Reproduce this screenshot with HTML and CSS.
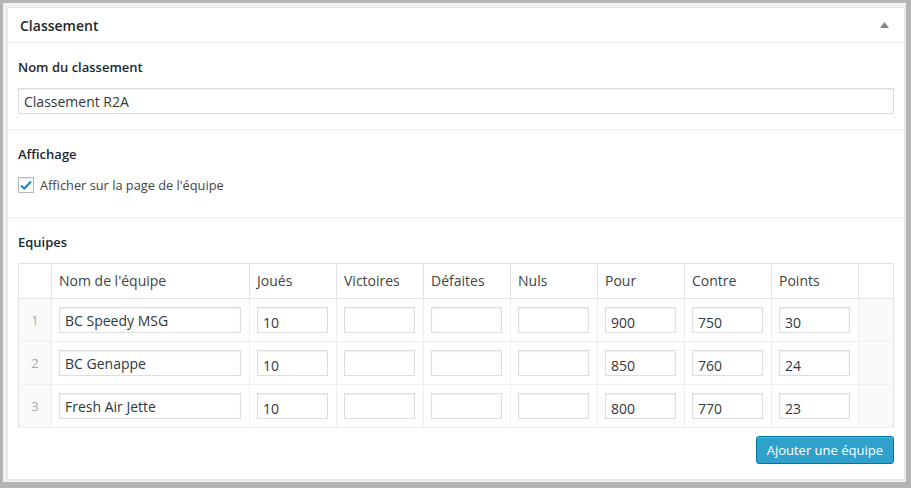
FILE: index.html
```html
<!DOCTYPE html>
<html>
  <head>
    <meta charset="utf-8">
    <title>Classement</title>
    <link rel="stylesheet" href="styles.css">
  </head>
  <body>
    <div class="frame">
      <div class="postbox">
        <div class="postbox-head">
          <h2>Classement</h2>
          <svg class="toggle" width="9" height="6" viewBox="0 0 9 6"><path d="M0 6 L4.5 0 L9 6 Z" fill="#82878c"/></svg>
        </div>

        <div class="section">
          <div class="label">Nom du classement</div>
          <input type="text" class="text-input" value="Classement R2A">
        </div>

        <div class="section">
          <div class="label">Affichage</div>
          <label class="check-row">
            <span class="checkbox">
              <svg width="12" height="10" viewBox="0 0 12 10"><path d="M1 5.5 L4.3 8.5 L11 1.5" fill="none" stroke="#1e8cbe" stroke-width="2.2"/></svg>
            </span>
            Afficher sur la page de l'équipe
          </label>
        </div>

        <div class="section last">
          <div class="label">Equipes</div>
          <table class="teams">
            <colgroup>
              <col style="width:33px">
              <col style="width:198px">
              <col style="width:87px"><col style="width:87px"><col style="width:87px"><col style="width:87px">
              <col style="width:87px"><col style="width:87px"><col style="width:87px">
              <col style="width:35px">
            </colgroup>
            <thead>
              <tr>
                <th></th>
                <th>Nom de l'équipe</th>
                <th>Joués</th>
                <th>Victoires</th>
                <th>Défaites</th>
                <th>Nuls</th>
                <th>Pour</th>
                <th>Contre</th>
                <th>Points</th>
                <th></th>
              </tr>
            </thead>
            <tbody>
              <tr>
                <td class="idx">1</td>
                <td><input class="cell-input" value="BC Speedy MSG"></td>
                <td><input class="cell-input num" value="10"></td>
                <td><input class="cell-input num" value=""></td>
                <td><input class="cell-input num" value=""></td>
                <td><input class="cell-input num" value=""></td>
                <td><input class="cell-input num" value="900"></td>
                <td><input class="cell-input num" value="750"></td>
                <td><input class="cell-input num" value="30"></td>
                <td class="side"></td>
              </tr>
              <tr>
                <td class="idx">2</td>
                <td><input class="cell-input" value="BC Genappe"></td>
                <td><input class="cell-input num" value="10"></td>
                <td><input class="cell-input num" value=""></td>
                <td><input class="cell-input num" value=""></td>
                <td><input class="cell-input num" value=""></td>
                <td><input class="cell-input num" value="850"></td>
                <td><input class="cell-input num" value="760"></td>
                <td><input class="cell-input num" value="24"></td>
                <td class="side"></td>
              </tr>
              <tr>
                <td class="idx">3</td>
                <td><input class="cell-input" value="Fresh Air Jette"></td>
                <td><input class="cell-input num" value="10"></td>
                <td><input class="cell-input num" value=""></td>
                <td><input class="cell-input num" value=""></td>
                <td><input class="cell-input num" value=""></td>
                <td><input class="cell-input num" value="800"></td>
                <td><input class="cell-input num" value="770"></td>
                <td><input class="cell-input num" value="23"></td>
                <td class="side"></td>
              </tr>
            </tbody>
          </table>
          <div class="actions">
            <button class="button-primary">Ajouter une équipe</button>
          </div>
        </div>
      </div>
    </div>
  </body>
</html>
```

FILE: styles.css
```css
html, body {
  height: 100%;
}

body {
  margin: 0;
  padding: 3px 5px 6px 3px;
  box-sizing: border-box;
  background: #b4b4b4;
  font-family: 'Open Sans', 'Liberation Sans', sans-serif;
  font-size: 13px;
  color: #444;
  display: flex;
}

.frame {
  flex: 1;
  display: flex;
  background: #f1f1f1;
  padding: 4px 1px 2px 4px;
}

.postbox {
  flex: 1;
  background: #fff;
  border: 1px solid #e5e5e5;
  box-shadow: 0 1px 1px rgba(0,0,0,0.04);
}

.postbox-head {
  display: flex;
  align-items: center;
  justify-content: space-between;
  border-bottom: 1px solid #eee;
  padding: 0 15px 0 12px;
  height: 34px;
}

.postbox-head h2 {
  margin: 0;
  font-size: 14px;
  font-weight: 600;
  color: #23282d;
}

.section {
  padding: 14px 10px 14px 10px;
  border-bottom: 1px solid #eee;
}

.section.last {
  border-bottom: none;
}

.label {
  font-weight: 600;
  line-height: 20px;
  color: #23282d;
  margin-bottom: 11px;
}

.text-input {
  display: block;
  width: 100%;
  box-sizing: border-box;
  height: 26px;
  border: 1px solid #ddd;
  box-shadow: inset 0 1px 2px rgba(0,0,0,0.07);
  padding: 0 5px;
  font-family: inherit;
  font-size: 14px;
  color: #32373c;
  margin-bottom: 1px;
}

.check-row {
  display: flex;
  align-items: center;
  gap: 6px;
  line-height: 20px;
  margin-top: 2px;
  margin-bottom: 8px;
  font-size: 12.8px;
}

.checkbox {
  width: 16px;
  height: 16px;
  box-sizing: border-box;
  border: 1px solid #b4b9be;
  box-shadow: inset 0 1px 2px rgba(0,0,0,0.1);
  display: flex;
  align-items: center;
  justify-content: center;
}

.teams {
  width: 100%;
  table-layout: fixed;
  border-collapse: collapse;
  border: 1px solid #e1e1e1;
}

.teams th {
  text-align: left;
  font-weight: normal;
  font-size: 14px;
  line-height: 18px;
  padding: 8px 7px;
  color: #444;
  border-left: 1px solid #e1e1e1;
  border-bottom: 1px solid #e1e1e1;
}

.teams td {
  padding: 8px 8px 8px 7px;
  height: 26px;
  border-left: 1px solid #eee;
  border-bottom: 1px solid #eee;
}

.teams td.idx {
  background: #f9f9f9;
  color: #aaa;
  text-align: center;
  padding: 0;
  border-left: none;
}

.teams td.side {
  background: #f9f9f9;
}

.cell-input {
  display: block;
  width: 100%;
  box-sizing: border-box;
  height: 26px;
  border: 1px solid #ddd;
  box-shadow: inset 0 1px 2px rgba(0,0,0,0.07);
  padding: 0 5px;
  font-family: inherit;
  font-size: 14px;
  color: #32373c;
}

.cell-input.num {
  padding-top: 4px;
}

.actions {
  display: flex;
  justify-content: flex-end;
  margin-top: 8px;
}

.button-primary {
  height: 28px;
  padding: 0 10px 1px;
  background: #2ea2cc;
  border: 1px solid #0074a2;
  border-radius: 3px;
  box-shadow: inset 0 1px 0 rgba(120,200,230,0.5);
  color: #fff;
  font-family: inherit;
  font-size: 13px;
}
```
